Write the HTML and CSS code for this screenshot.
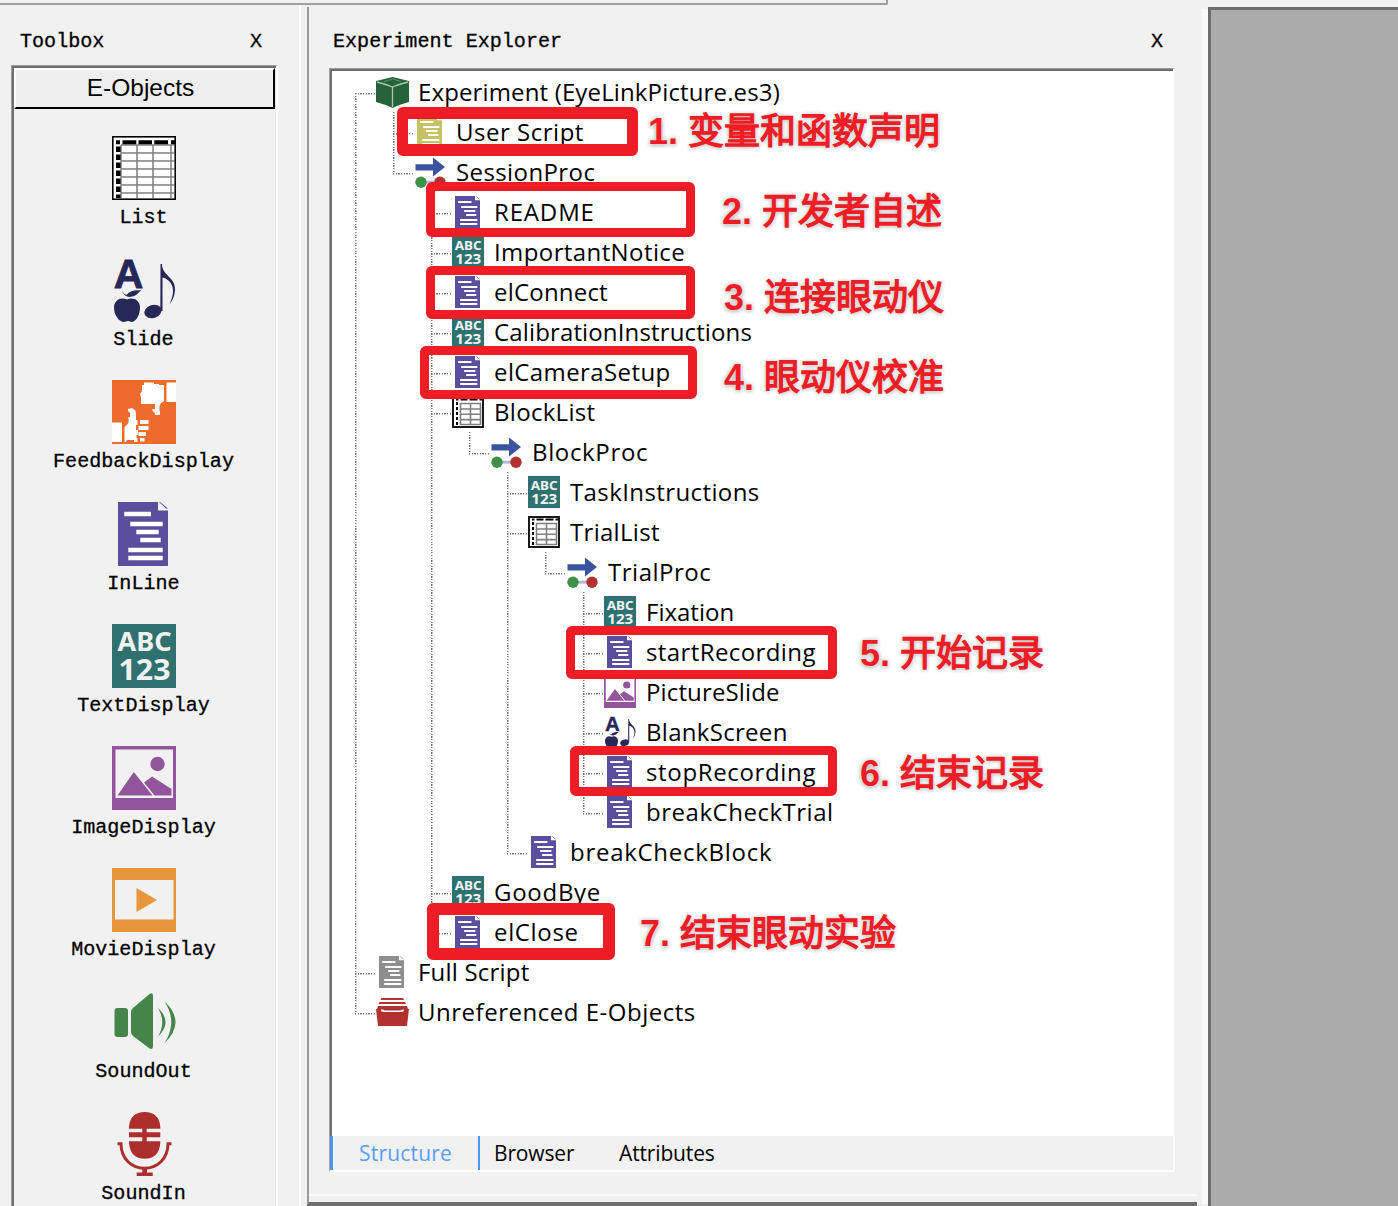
FILE: index.html
```html
<!DOCTYPE html>
<html lang="zh-CN">
<head>
<meta charset="utf-8">
<title>Experiment Explorer</title>
<link rel="stylesheet" href="styles.css">
</head>
<body>
<svg class="sprite" aria-hidden="true">
  <symbol id="list-lg" viewBox="0 0 64 64">
    <rect x=".75" y=".75" width="62.5" height="62.5" fill="#fff" stroke="#000" stroke-width="1.7"/>
    <path d="M9 9H62M9 17H62M9 25H62M9 33H62M9 41H62M9 49H62M9 57H62M9 9V62M25 9V62M41 9V62M59 9V62" stroke="#808080" stroke-width="1.5" fill="none"/>
    <path d="M4 6.3H8M10.5 6.3H24.3M26.5 6.3H40M42.300 6.3H56M59 6.3H63" stroke="#000" stroke-width="4"/>
    <path d="M6.300 10.500V62" stroke="#000" stroke-width="4.500" stroke-dasharray="5.500 2.500"/>
  </symbol>
  <symbol id="list" viewBox="0 0 32 32">
    <rect x="1" y="1" width="30" height="30" fill="#fff" stroke="#000" stroke-width="1.8"/>
    <path d="M4 3.600H30" stroke="#000" stroke-width="2" stroke-dasharray="2.500 2 7 2 8 2"/>
    <path d="M5 6V30" stroke="#000" stroke-width="2" stroke-dasharray="3 2"/>
    <path d="M8.500 7.500H28.500V29M8.500 7V29M18.500 7.500V29M8.500 13H28.500M8.500 18.300H28.500M8.500 23.600H28.500M8.500 28.500H28.500" stroke="#808080" stroke-width="1.600" fill="none"/>
  </symbol>
  <symbol id="slide" viewBox="0 0 64 64">
    <g fill="#272758">
      <text x="1.800" y="29.700" font-family="Liberation Sans, Arial, sans-serif" font-weight="700" font-size="41" stroke="#272758" stroke-width=".8">A</text>
      <path d="M15 41.500C9 38.500 2 42 2 49.500C2 57 7 64 12 64C14 64 14 63 16 63S18 64 20 64C24 63.500 28 57 28 49.500C28 42 21 38.500 15 41.500ZM10 33C12 38 16 40 20 38.500C25 38 26 34 29.500 32.500C22 31.500 17 33.500 14.500 37C12.500 36 11.500 35 10 33Z"/>
      <ellipse cx="41" cy="53.500" rx="8.800" ry="6.500" transform="rotate(-18 41 53.500)"/>
      <path d="M48.500 6H50C50 18 64 19 63 32C62.500 39 60 43 57.500 46.500C60 40 62 35 60.500 29C59 23 53.500 20 50.500 19.500V53H48.300Z"/>
    </g>
  </symbol>
  <symbol id="feedback" viewBox="0 0 64 64">
    <rect width="64" height="64" fill="#ed6c2d"/>
    <path fill="#fff" d="M54.500 2.500H64V22H54.500ZM32 2.500H42V4H47V5H52V21L49 23L47.500 26V31H48V35H43V33L40.500 31V29H43V24H29V18L28 14L30 11V5H32ZM0 42.500H10V62H0ZM12.500 47L16.500 43V37H18V33L16 31V29L20 28L23 30L24 33V40H25.500V45H24V50H26V55H24.500V58H25.500V62H22V60H15L14 62H12.500ZM28 40H36.500V44H28ZM26.500 46H36.500V50H26.500ZM26.500 52H34V56H26.500ZM28 58H32.500V61.500H28Z"/>
  </symbol>
  <symbol id="doc" viewBox="0 0 64 64">
    <path fill="currentColor" d="M6 0H46V8.500H56V64H6ZM48 0L56 6.500H54L47 0Z"/>
    <path d="M12.300 12H39M18.300 22H50.700M24.300 30H46.700M28.300 38H48.700M16.300 48H50.700M16.300 56H50.700" stroke="#fff" stroke-width="4.300"/>
  </symbol>
  <symbol id="text" viewBox="0 0 64 64">
    <rect width="64" height="64" fill="#2f716e"/>
    <g fill="#f1f1f1" font-family="Noto Sans, Open Sans, sans-serif" font-weight="700">
      <text x="5.500" y="27" font-size="26.500" textLength="54" lengthAdjust="spacingAndGlyphs">ABC</text>
      <text x="6.500" y="56" font-size="29" textLength="52" lengthAdjust="spacingAndGlyphs">123</text>
    </g>
  </symbol>
  <symbol id="image" viewBox="0 0 64 64">
    <path fill="#92549c" fill-rule="evenodd" d="M0 0H64V64H0ZM3.500 3.500V52H61V3.500Z"/>
    <circle cx="45.500" cy="18" r="7.200" fill="#92549c"/>
    <path fill="#92549c" d="M5.500 49.500L21.800 26L31 37.500L40.500 49.500ZM32 36.500L40 30.500L59.500 43V49.500H42.500Z"/>
  </symbol>
  <symbol id="movie" viewBox="0 0 64 64">
    <path fill="#e8963c" fill-rule="evenodd" d="M0 0H64V64H0ZM3 12V51.500H61.500V12Z"/>
    <path fill="#e8963c" d="M24.500 20L45 32L24.500 44Z"/>
  </symbol>
  <symbol id="sound-out" viewBox="0 0 64 64">
    <g fill="#458549">
      <rect x="2.500" y="18" width="13.500" height="29" rx="3"/>
      <path d="M19 22Q19 20 21 18L37.500 4Q41 2 41 6V56Q41 60 37.500 58.500L21 46Q19 44 19 42Z"/>
      <path d="M46 18Q61 32 46 46.500Q54.500 32 46 18ZM52.500 11.500Q74.500 32 52.500 53Q66 32 52.500 11.500Z"/>
    </g>
  </symbol>
  <symbol id="sound-in" viewBox="0 0 64 64">
    <g fill="#ac2f2e">
      <path d="M17 16.700V14.500Q18.500 0 32.700 0T48.300 14.500V16.700H34.700V20.300H48.300V25.300H34.700V29.300H48.300V31Q47 46.700 32.700 46.700T17 31V29.300H30.300V25.300H17V20.300H30.300V16.700Z"/>
      <path d="M30.300 56H35V60.500H40.700V64H24.700V60.500H30.300Z"/>
    </g>
    <path d="M5.500 31.800H9C9 47 20 56.300 32.500 56.300S56 47 56 31.800H59.500" fill="none" stroke="#ac2f2e" stroke-width="3"/>
  </symbol>
  <symbol id="proc" viewBox="0 0 32 32">
    <path fill="#3b54a0" d="M1.500 8.300H19V1.500L31 11L19 20.500V14.500H1.500Z"/>
    <path stroke="#b4b9dc" stroke-width="3" d="M7 26.200H26"/>
    <circle cx="7" cy="26.200" r="5.700" fill="#3f9149"/>
    <circle cx="26" cy="26.200" r="5.700" fill="#b23232"/>
  </symbol>
  <symbol id="cube" viewBox="0 0 33 32">
    <path fill="#27633a" d="M16.500 1L33 5V26Q25 28 16.500 32Q8 28 0 26V5Z"/>
    <path d="M1 6Q9 8 16.500 11Q24 8 32 6M16.500 11V31" fill="none" stroke="#a9c7b0" stroke-width="1.300"/>
    <path d="M8 5.500L16.500 3L25 5.500" fill="none" stroke="#5d8c6a" stroke-width="1"/>
  </symbol>
  <symbol id="folder" viewBox="0 0 33 32">
    <path fill="#b23232" fill-rule="evenodd" d="M5.500 2H27L28 4H4.500ZM3.500 6H29L30 8H2.500ZM2 10H31L32 13H33L31 30H2L0 13H1ZM5 13.500Q5 16 7.500 16H25Q28 16 28 13.500L26 13.800Q25 14.500 24 14.500H9Q8 14.500 7 13.500Z"/>
  </symbol>
</svg>

<div class="toolbar-edge"></div>
<main class="workspace">
  <section class="toolbox">
    <header class="pane-title"><span>Toolbox</span><span>X</span></header>
    <div class="toolbox-frame">
      <h2 class="toolbox-head">E-Objects</h2>
      <ul class="tools">
        <li><svg><use href="#list-lg"/></svg><span>List</span></li>
        <li><svg><use href="#slide"/></svg><span>Slide</span></li>
        <li><svg><use href="#feedback"/></svg><span>FeedbackDisplay</span></li>
        <li><svg class="purple"><use href="#doc"/></svg><span>InLine</span></li>
        <li><svg><use href="#text"/></svg><span>TextDisplay</span></li>
        <li><svg><use href="#image"/></svg><span>ImageDisplay</span></li>
        <li><svg><use href="#movie"/></svg><span>MovieDisplay</span></li>
        <li><svg><use href="#sound-out"/></svg><span>SoundOut</span></li>
        <li><svg><use href="#sound-in"/></svg><span>SoundIn</span></li>
      </ul>
    </div>
  </section>

  <section class="explorer">
    <header class="pane-title"><span>Experiment Explorer</span><span>X</span></header>
    <div class="explorer-frame">
      <div class="tree-area">
        <ul class="tree">
          <li><div class="row"><svg class="wide"><use href="#cube"/></svg><span class="track-1">Experiment (EyeLinkPicture.es3)</span></div>
            <ul>
              <li><div class="row"><svg class="olive"><use href="#doc"/></svg><span class="track-5">User Script</span></div></li>
              <li><div class="row"><svg><use href="#proc"/></svg><span class="track-4">SessionProc</span></div>
                <ul>
                  <li><div class="row"><svg class="purple"><use href="#doc"/></svg><span class="track-8">README</span></div></li>
                  <li><div class="row"><svg><use href="#text"/></svg><span class="track-4">ImportantNotice</span></div></li>
                  <li><div class="row"><svg class="purple"><use href="#doc"/></svg><span class="track-2">elConnect</span></div></li>
                  <li><div class="row"><svg><use href="#text"/></svg><span class="track-1">CalibrationInstructions</span></div></li>
                  <li><div class="row"><svg class="purple"><use href="#doc"/></svg><span class="track-4">elCameraSetup</span></div></li>
                  <li><div class="row"><svg><use href="#list"/></svg><span class="track-3">BlockList</span></div>
                    <ul>
                      <li><div class="row"><svg><use href="#proc"/></svg><span class="track-6">BlockProc</span></div>
                        <ul>
                          <li><div class="row"><svg><use href="#text"/></svg><span class="track-4">TaskInstructions</span></div></li>
                          <li><div class="row"><svg><use href="#list"/></svg><span class="track-3">TrialList</span></div>
                            <ul>
                              <li><div class="row"><svg><use href="#proc"/></svg><span class="track-5">TrialProc</span></div>
                                <ul>
                                  <li><div class="row"><svg><use href="#text"/></svg><span>Fixation</span></div></li>
                                  <li><div class="row"><svg class="purple"><use href="#doc"/></svg><span class="track-4">startRecording</span></div></li>
                                  <li><div class="row"><svg><use href="#image"/></svg><span class="track-1">PictureSlide</span></div></li>
                                  <li><div class="row"><svg><use href="#slide"/></svg><span class="track-3">BlankScreen</span></div></li>
                                  <li><div class="row"><svg class="purple"><use href="#doc"/></svg><span class="track-6">stopRecording</span></div></li>
                                  <li><div class="row"><svg class="purple"><use href="#doc"/></svg><span class="track-5">breakCheckTrial</span></div></li>
                                </ul>
                              </li>
                            </ul>
                          </li>
                          <li><div class="row"><svg class="purple"><use href="#doc"/></svg><span class="track-7">breakCheckBlock</span></div></li>
                        </ul>
                      </li>
                    </ul>
                  </li>
                  <li><div class="row"><svg><use href="#text"/></svg><span class="track-7">GoodBye</span></div></li>
                  <li><div class="row"><svg class="purple"><use href="#doc"/></svg><span class="track-6">elClose</span></div></li>
                </ul>
              </li>
            </ul>
          </li>
          <li><div class="row"><svg class="gray"><use href="#doc"/></svg><span class="track-2">Full Script</span></div></li>
          <li><div class="row"><svg class="wide"><use href="#folder"/></svg><span class="track-5">Unreferenced E-Objects</span></div></li>
        </ul>
      </div>
      <nav class="tabs"><span class="tab active">Structure</span><span class="tab">Browser</span><span class="tab">Attributes</span></nav>
    </div>
  </section>
  <div class="document-area"></div>
</main>

<div class="mark mark-1"></div><p class="note note-1"><b>1. </b>变量和函数声明</p>
<div class="mark mark-2"></div><p class="note note-2"><b>2. </b>开发者自述</p>
<div class="mark mark-3"></div><p class="note note-3"><b>3. </b>连接眼动仪</p>
<div class="mark mark-4"></div><p class="note note-4"><b>4. </b>眼动仪校准</p>
<div class="mark mark-5"></div><p class="note note-5"><b>5. </b>开始记录</p>
<div class="mark mark-6"></div><p class="note note-6"><b>6. </b>结束记录</p>
<div class="mark mark-7"></div><p class="note note-7"><b>7. </b>结束眼动实验</p>
</body>
</html>
```
FILE: styles.css
```css
* { box-sizing: border-box; }
body {
  margin: 0;
  width: 1398px;
  height: 1206px;
  overflow: hidden;
  position: relative;
  background: #f1f1f1;
  color: #000;
  font-family: "Open Sans", "Noto Sans", sans-serif;
}
ul { list-style: none; margin: 0; padding: 0; }
.sprite { display: none; }

.toolbar-edge {
  width: 888px;
  height: 5px;
  border-bottom: 2px solid #a0a0a0;
  border-right: 2px solid #a0a0a0;
  border-bottom-right-radius: 2px;
}
.workspace { display: flex; height: 1201px; }

.pane-title {
  display: flex;
  justify-content: space-between;
  padding-top: 1px;
  font: 20.1px/24px "Liberation Mono", monospace;
  -webkit-text-stroke: .3px #000;
}

/* toolbox */
.toolbox {
  display: flex;
  flex-direction: column;
  width: 301px;
  padding: 24px 22px 0 11px;
  border-right: 2px solid #fcfcfc;
}
.toolbox .pane-title { padding: 1px 15px 0 9px; height: 36px; }
.toolbox-frame {
  flex: 1;
  width: 267px;
  overflow: hidden;
  border-style: solid;
  border-width: 1px 2px 0 1px;
  border-color: #a0a0a0 #fcfcfc #fff #a0a0a0;
  box-shadow: inset 2px 2px #6e6e6e, inset -1px 0 #e6e6e6;
  padding: 2px 1px 0 2px;
}
.toolbox-head {
  margin: 0;
  width: 261px;
  height: 41px;
  padding-right: 8px;
  border: 2px solid #000;
  border-top-color: #fff;
  border-left-color: #fff;
  background: #efefef;
  text-align: center;
  font: 24.500px/36px "Liberation Sans", Arial, sans-serif;
}
.tools { padding-top: 27px; width: 260px; }
.tools li {
  display: flex;
  flex-direction: column;
  align-items: center;
  height: 122px;
  font: 20.1px/36px "Liberation Mono", monospace;
  -webkit-text-stroke: .3px #000;
}
.tools span { padding-right: 1px; }
.tools svg { width: 64px; height: 64px; flex: none; -webkit-text-stroke: 0; }

/* experiment explorer */
.explorer {
  width: 890px;
  margin: 2px 0 0 6px;
  padding: 22px 23px 0 20px;
  border-left: 2px solid #9a9a9a;
  border-bottom: 4px solid #6e6e6e;
  box-shadow: inset 0 -6px #f1f1f1, inset 0 -8px #fcfcfc;
}
.explorer .pane-title { padding: 1px 11px 0 4px; height: 39px; }
.explorer-frame {
  width: 846px;
  height: 1104px;
  border-style: solid;
  border-width: 1px 2px 2px 1px;
  border-color: #a0a0a0 #fafafa #fff #a0a0a0;
}
.tree-area {
  height: 1067px;
  padding: 3px 0 0 24px;
  background: #fff;
  box-shadow: inset 2px 2px #6e6e6e;
}
.tree { font-size: 24px; }
.tree li {
  --v: repeating-linear-gradient(180deg, #777 0 1.300px, transparent 1.300px 2.670px);
  --h: repeating-linear-gradient(90deg, #777 0 1.300px, transparent 1.300px 2.670px);
  padding-left: 22px;
  background: var(--v) 1px 0 / 1.500px 100% no-repeat, var(--h) 1px 20.500px / 20px 1.500px no-repeat;
}
.tree li:last-child { background-size: 1.500px 21px, 20px 1.500px; }
.tree > li:first-child { background-position: 1px 21px, 1px 20.500px; }
.tree li ul { margin-left: 16px; }
.row { display: flex; align-items: center; height: 40px; white-space: nowrap; }
.row svg { width: 32px; height: 32px; margin-right: 10px; flex: none; }
.row svg.wide { width: 33px; margin-right: 9px; }
.row span { height: 40px; line-height: 39px; }
.purple { color: #5b4e9c; }
.olive { color: #c5c266; }
.gray { color: #8e8e8e; }

/* label tracking, in tenths of a pixel */
.track-1 { letter-spacing: .14px; }
.track-2 { letter-spacing: .2px; }
.track-3 { letter-spacing: .3px; }
.track-4 { letter-spacing: .4px; }
.track-5 { letter-spacing: .52px; }
.track-6 { letter-spacing: .65px; }
.track-7 { letter-spacing: .72px; }
.track-8 { letter-spacing: .85px; }

.tabs {
  display: flex;
  height: 34px;
  background: #f1f1f1;
  border-left: 3px solid #4b94f8;
  font-size: 21px;
  line-height: 35px;
}
.tab { width: 125px; padding-left: 14px; letter-spacing: -.15px; }
.tab.active { width: 147px; padding-left: 26px; border-right: 2px solid #4b94f8; color: #5b9ef8; letter-spacing: .2px; }

.document-area {
  flex: 1;
  margin: 2px 0 0 11px;
  background: #ababab;
  border-left: 3px solid #6e6e6e;
  border-top: 3px solid #6e6e6e;
  box-shadow: -8px 0 0 -2px #fafafa;
}

/* red call-outs drawn over the tree */
.mark { position: absolute; border: 9.500px solid #ee1c25; border-radius: 6px; }
.mark-1 { left: 397px; top: 107px; width: 241px; height: 49px; border-width: 12px 11px; }
.mark-2 { left: 426px; top: 182px; width: 269px; height: 55px; }
.mark-3 { left: 426px; top: 266px; width: 269px; height: 53px; }
.mark-4 { left: 420px; top: 346px; width: 277px; height: 53px; }
.mark-5 { left: 566px; top: 626px; width: 271px; height: 53px; }
.mark-6 { left: 570px; top: 746px; width: 267px; height: 50px; }
.mark-7 { left: 427px; top: 903px; width: 188px; height: 57px; border-width: 12px; }
.note {
  position: absolute;
  margin: 0;
  color: #ee1c25;
  font: 400 36px/44px "Liberation Sans", "Noto Sans CJK SC", sans-serif;
  -webkit-text-stroke: 1.300px #ee1c25;
  white-space: pre;
  text-shadow: 0 0 2px #fff, 0 1px 4px #aaa, 0 0 5px #ccc;
}
.note b { -webkit-text-stroke: 0; }
.note-1 { left: 648px; top: 110px; }
.note-2 { left: 722px; top: 190px; }
.note-3 { left: 724px; top: 276px; }
.note-4 { left: 724px; top: 356px; }
.note-5 { left: 860px; top: 632px; }
.note-6 { left: 860px; top: 752px; }
.note-7 { left: 640px; top: 912px; }
```
